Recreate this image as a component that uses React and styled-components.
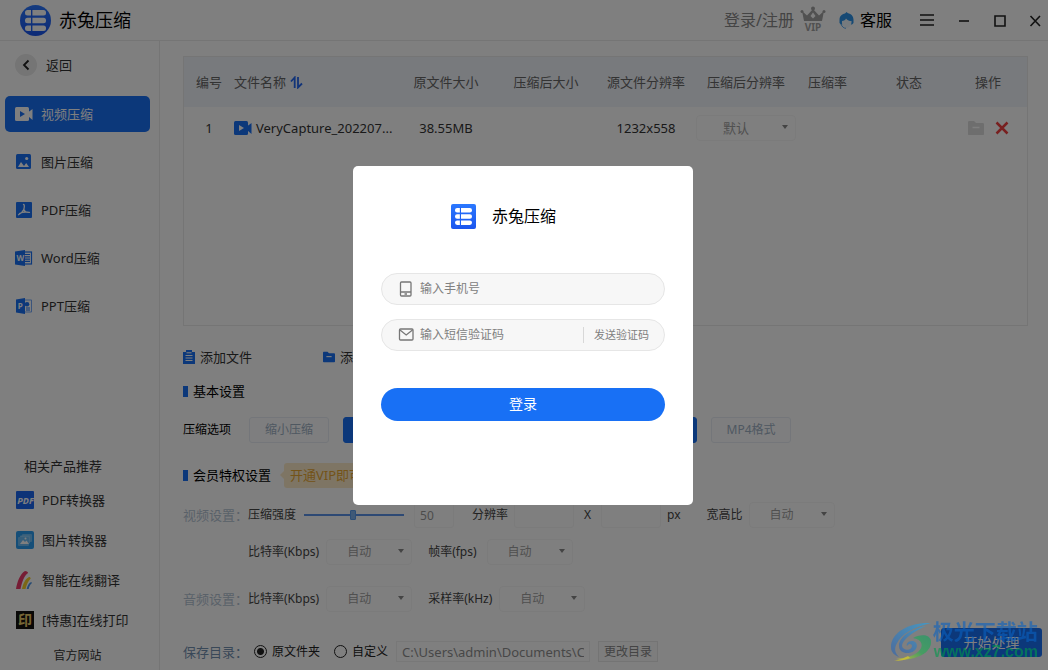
import React, { useState } from "react";
import styled, { createGlobalStyle } from "styled-components";

const GlobalStyle = createGlobalStyle`
  * {
    box-sizing: border-box;
  }
  body {
    margin: 0;
    background: #fff;
    color: #333;
    font-family: "Noto Sans", "Noto Sans CJK SC", sans-serif;
    font-size: 13px;
    line-height: 20px;
  }
  button, input, select {
    font: inherit;
    margin: 0;
  }
  a {
    color: inherit;
    text-decoration: none;
  }
  svg {
    display: block;
    flex: none;
  }
`;

const Page = styled.div`
  display: flex;
  flex-direction: column;
  min-height: 100vh;
`;

const Header = styled.header`
  display: flex;
  align-items: center;
  height: 41px;
  padding: 0 6px 0 20px;
  border-bottom: 1px solid #ebebeb;
`;

const HeaderTitle = styled.h1`
  flex: 1;
  margin: 0 0 0 8px;
  font-size: 18px;
  font-weight: normal;
  line-height: 26px;
  color: #000;
`;

const HeaderLink = styled.a`
  display: flex;
  align-items: center;
  gap: 6px;
  margin-right: ${(p) => p.$space}px;
  font-size: 16px;
  line-height: 24px;
  color: ${(p) => p.$color};
`;

const WindowButtons = styled.div`
  display: flex;
  gap: 21px;
`;

const IconButton = styled.button`
  display: flex;
  padding: 0;
  border: 0;
  background: none;
  cursor: pointer;
`;

const Body = styled.div`
  display: flex;
  flex: 1;
`;

const Sidebar = styled.aside`
  display: flex;
  flex-direction: column;
  flex: none;
  width: 160px;
  padding: 13px 9px 4px 5px;
  border-right: 1px solid #ebebeb;
`;

const BackButton = styled.button`
  display: flex;
  align-items: center;
  gap: 9px;
  margin-bottom: 20px;
  padding: 0 0 0 10px;
  border: 0;
  background: none;
  color: #333;
  cursor: pointer;
`;

const BackCircle = styled.span`
  display: flex;
  align-items: center;
  justify-content: center;
  width: 22px;
  height: 22px;
  border-radius: 50%;
  background: #eaeaea;
`;

const Nav = styled.nav`
  display: flex;
  flex-direction: column;
  gap: 12px;
`;

const NavItem = styled.a`
  display: flex;
  align-items: center;
  gap: 8px;
  height: 36px;
  padding-left: 10px;
  border-radius: 5px;
  background: ${(p) => (p.$active ? "#1870f5" : "transparent")};
  color: ${(p) => (p.$active ? "#fff" : "#333")};
`;

const Related = styled.section`
  display: flex;
  flex-direction: column;
  margin-top: auto;
`;

const RelatedTitle = styled.h2`
  margin: 0 0 4px;
  padding-left: 19px;
  font-size: 13px;
  font-weight: normal;
  line-height: 20px;
`;

const RelatedLink = styled.a`
  display: flex;
  align-items: center;
  gap: 8px;
  height: 40px;
  padding-left: 11px;
`;

const SiteLink = styled.a`
  margin-top: 6px;
  font-size: 12px;
  text-align: center;
`;

const Main = styled.main`
  display: flex;
  flex: 1;
  flex-direction: column;
  min-width: 0;
`;

const FilePanel = styled.div`
  flex: 1;
  min-height: 120px;
  margin: 15px 20px 0 23px;
  border: 1px solid #ebebeb;
`;

const FileTable = styled.table`
  width: 100%;
  border-collapse: collapse;
  table-layout: fixed;
`;

const Th = styled.th`
  width: ${(p) => (p.$width ? `${p.$width}px` : "auto")};
  height: 50px;
  padding: 0 ${(p) => (p.$last ? 10 : 0)}px 0 0;
  background: #f0f4fa;
  color: #666;
  font-weight: normal;
  text-align: ${(p) => (p.$left ? "left" : "center")};
  white-space: nowrap;
`;

const Td = styled.td`
  height: 42px;
  padding: 0 ${(p) => (p.$last ? 10 : 0)}px 0 0;
  text-align: center;
`;

const Inline = styled.span`
  display: flex;
  align-items: center;
  justify-content: ${(p) => (p.$center ? "center" : "flex-start")};
  gap: ${(p) => p.$gap}px;
  white-space: nowrap;
`;

const SelectWrap = styled.span`
  display: inline-grid;
  align-items: center;
  width: ${(p) => p.$width}px;

  > * {
    grid-area: 1 / 1;
  }
  > svg {
    justify-self: end;
    margin-right: 8px;
  }
`;

const SelectBox = styled.select`
  width: 100%;
  height: 26px;
  padding: 0 20px 0 0;
  border: 1px solid #f6f6f6;
  border-radius: 4px;
  background: #fff;
  color: #a0a0a0;
  opacity: 1;
  appearance: none;
  text-align: center;
  text-align-last: center;
`;

const Settings = styled.div`
  display: flex;
  flex-direction: column;
  padding: 0 20px 0 23px;
`;

const Toolbar = styled.div`
  display: flex;
  gap: 71px;
  margin-top: 21px;
`;

const ToolButton = styled.button`
  display: flex;
  align-items: center;
  gap: 5px;
  padding: 0;
  border: 0;
  background: none;
  color: #333;
  cursor: pointer;
`;

const SectionTitle = styled.h2`
  display: flex;
  align-items: center;
  gap: 5px;
  height: 20px;
  margin: ${(p) => p.$top}px 0 0;
  color: #000;
  font-size: 13px;
  font-weight: normal;

  &::before {
    content: "";
    width: 5px;
    height: 11px;
    background: #1870f5;
  }
`;

const VipTip = styled.span`
  display: flex;
  align-items: center;
  margin-left: 4px;
  color: #e8a732;

  > span {
    height: 25px;
    padding: 0 6px;
    border-radius: 3px;
    background: #fdebc8;
    line-height: 25px;
  }
  &::before {
    content: "";
    border: 4px solid transparent;
    border-left-width: 0;
    border-right-color: #fdebc8;
  }
`;

const Row = styled.div`
  display: flex;
  align-items: center;
  margin-top: ${(p) => p.$top}px;
  font-size: 12px;
  white-space: nowrap;
`;

const OptionGroup = styled.div`
  display: flex;
  align-items: center;
  gap: 14px;
  margin-right: 34px;
`;

const OptionLabel = styled.span`
  margin-right: 4px;
  color: #000;
`;

const OptionButton = styled.button`
  width: 80px;
  height: 26px;
  padding: 0;
  border: 1px solid ${(p) => (p.$active ? "#1870f5" : "#e8edf4")};
  border-radius: 3px;
  background: ${(p) => (p.$active ? "#1870f5" : "#fcfdff")};
  color: ${(p) => (p.$active ? "#fff" : "#9fb0c3")};
  cursor: pointer;
`;

const GroupName = styled.span`
  width: ${(p) => (p.$strong ? 71 : 65)}px;
  color: ${(p) => (p.$strong ? "#7390b0" : "#b4c3d3")};
  font-size: 13px;
`;

const Field = styled.label`
  display: flex;
  align-items: center;
  gap: ${(p) => p.$gap}px;
  margin-right: ${(p) => p.$space}px;
  color: #444;
`;

const Slider = styled.input`
  width: 100px;
  height: 10px;
  margin: 0;
  appearance: none;
  background: none;

  &::-webkit-slider-runnable-track {
    height: 2px;
    background: #5b93e8;
  }
  &::-webkit-slider-thumb {
    width: 6px;
    height: 10px;
    margin-top: -4px;
    border: 1px solid #5a9cec;
    border-radius: 1px;
    appearance: none;
    background: #7fb2ee;
  }
`;

const NumberBox = styled.input`
  width: ${(p) => p.$width}px;
  height: 26px;
  padding: 0 5px;
  border: 1px solid #f6f6f6;
  border-radius: 3px;
  background: #fff;
  color: #999;
`;

const Footer = styled.footer`
  display: flex;
  align-items: flex-start;
  justify-content: space-between;
  margin-top: 16px;
  padding: 0 6px 8px 23px;
  font-size: 12px;
  white-space: nowrap;
`;

const SaveTo = styled.div`
  display: flex;
  align-items: center;
  padding-top: 13px;
`;

const RadioLabel = styled.label`
  display: flex;
  align-items: center;
  gap: 5px;
  margin-right: ${(p) => p.$space}px;
  color: #222;
`;

const Radio = styled.input`
  width: 13px;
  height: 13px;
  border: 1px solid #222;
  border-radius: 50%;
  appearance: none;

  &:checked {
    background: radial-gradient(circle, #222 0 3px, transparent 4px);
  }
`;

const PathBox = styled.input`
  width: 194px;
  height: 21px;
  padding: 0 5px;
  border: 1px solid #f0f0f0;
  background: #fff;
  color: #8f8f8f;
  font-size: 13px;
`;

const ChangeButton = styled.button`
  width: 60px;
  height: 21px;
  margin-left: 8px;
  padding: 0;
  border: 1px solid #e8e8e8;
  background: #fafafa;
  color: #888;
  line-height: 18px;
`;

const StartButton = styled.button`
  width: 101px;
  height: 29px;
  padding: 0;
  border: 0;
  border-radius: 3px;
  background: #1870f5;
  color: #fff;
  font-size: 14px;
`;

const Overlay = styled.div`
  position: fixed;
  inset: 0;
  display: flex;
  align-items: center;
  justify-content: center;
  padding-right: 2px;
  background: rgba(0, 0, 0, 0.5);
`;

const LoginForm = styled.form`
  display: flex;
  flex-direction: column;
  width: 340px;
  padding: 38px 28px 84px;
  border-radius: 5px;
  background: #fff;
`;

const Brand = styled.div`
  display: flex;
  align-items: center;
  gap: 16px;
  height: 25px;
  margin-bottom: 44px;
  padding-left: 70px;
  color: #000;
  font-size: 16px;
`;

const InputRow = styled.div`
  display: flex;
  align-items: center;
  height: 32px;
  margin-bottom: 14px;
  padding: 0 15px 0 16px;
  border: 1px solid #e6e6e6;
  border-radius: 16px;
  background: #f7f7f7;
`;

const Input = styled.input`
  flex: 1;
  min-width: 0;
  padding: 0 0 0 6px;
  border: 0;
  outline: 0;
  background: none;
  color: #333;
  font-size: 12px;

  &::placeholder {
    color: #808080;
  }
`;

const CodeButton = styled.button`
  height: 16px;
  padding: 0 0 0 10px;
  border: 0;
  border-left: 1px solid #d8d8d8;
  background: none;
  color: #808080;
  font-size: 11px;
  line-height: 14px;
  cursor: pointer;
`;

const ButtonSubmit = styled.button`
  height: 33px;
  margin-top: 23px;
  border: 0;
  border-radius: 17px;
  background: #1870f5;
  color: #fff;
  font-size: 14px;
  cursor: pointer;
`;

const Watermark = styled.div`
  position: fixed;
  right: 10px;
  bottom: 8px;
  display: flex;
  align-items: flex-end;
  opacity: 0.6;
  pointer-events: none;
`;

const WatermarkText = styled.div`
  display: flex;
  flex-direction: column;
  color: #0a62c0;
  font-size: 21px;
  font-weight: bold;
  line-height: 22px;
`;

const WatermarkUrl = styled.span`
  padding-left: 1px;
  color: #009a4c;
  font-family: "Liberation Sans", sans-serif;
  font-size: 16px;
  line-height: 20px;
`;

/* logo: list of three rounded bars cut by a vertical line */
const Logo = ({ size, round }) => (
  <svg width={size} height={size} viewBox="0 0 31 31">
    <defs>
      <linearGradient id={`logo${size}`} x1="0" y1="0" x2="0" y2="1">
        <stop offset="0" stopColor="#2b78ff" />
        <stop offset="1" stopColor="#1b55ee" />
      </linearGradient>
    </defs>
    <rect width="31" height="31" rx={round ? 15.5 : 2.5} fill={`url(#logo${size})`} />
    <g fill="#fff">
      <rect x="5" y="5" width="21" height="5.5" rx="2.5" />
      <rect x="5" y="12.7" width="21" height="5.5" rx="2.5" />
      <rect x="5" y="20.4" width="21" height="5.5" rx="2.5" />
    </g>
    <path d="M11.7 4v23" stroke="#1f62f4" strokeWidth="1.4" />
  </svg>
);

const VideoIcon = ({ color, inner }) => (
  <svg width="18" height="16" viewBox="0 0 18 16">
    <rect y="1" width="14" height="14" rx="1.5" fill={color} />
    <path d="M13.5 6 17.5 3v11l-4-3.5z" fill={color} />
    <path d="M5 5v6l5-3z" fill={inner} />
  </svg>
);

const ImageIcon = () => (
  <svg width="18" height="16" viewBox="0 0 18 16">
    <rect x="1" y="0" width="15" height="15" rx="1.5" fill="#1870f5" />
    <circle cx="11.7" cy="4.5" r="1.6" fill="#fff" />
    <path d="M3 13l3-5 3 4 2.200-3L14 13z" fill="#fff" />
  </svg>
);

const PdfIcon = () => (
  <svg width="18" height="16" viewBox="0 0 18 16">
    <rect x="1" width="16" height="16" rx="1" fill="#1870f5" />
    <path
      d="M8.5 2.5c1.3 0 .8 3 .3 5 1 2.3 3 3.3 5.7 2.8M8.8 7.5C7.500 10.500 5 12 3.500 12.800M4.500 11.500c2.500-1.300 6-1.800 9.500-1.200"
      fill="none"
      stroke="#fff"
      strokeWidth="1.3"
      strokeLinecap="round"
    />
  </svg>
);

const OfficeIcon = ({ letter }) => (
  <svg width="18" height="16" viewBox="0 0 18 16">
    <rect x="9" y="2" width="7.5" height="12" fill="#fff" stroke="#1870f5" strokeWidth={letter === "W" ? 1.2 : 0.6} />
    {letter === "W" ? (
      <path d="M10 4.500h5M10 6.800h5M10 9.100h5M10 11.400h5" stroke="#1870f5" strokeWidth="1.2" />
    ) : (
      <>
        <circle cx="12" cy="6.2" r="2.3" fill="#1870f5" />
        <path d="M11 10h4M11 12h4" stroke="#1870f5" />
      </>
    )}
    <path d={letter === "W" ? "M0 1.500 10 0v16L0 14.500z" : "M1 1.500 10 0v16l-9-1.500z"} fill="#1870f5" />
    <text x="5.3" y="11" fill="#fff" fontSize="8" fontWeight="bold" textAnchor="middle">
      {letter}
    </text>
  </svg>
);

const PdfToolIcon = () => (
  <svg width="18" height="18" viewBox="0 0 18 18">
    <rect width="18" height="18" rx="1" fill="#1b66f0" />
    <text x="9.5" y="12.5" fill="#fff" fontSize="9" fontWeight="bold" fontStyle="italic" textAnchor="middle">
      PDF
    </text>
  </svg>
);

const ImageToolIcon = () => (
  <svg width="18" height="18" viewBox="0 0 18 18">
    <rect width="18" height="18" rx="2" fill="#2a9df0" />
    <rect x="6" y="3" width="10" height="8" rx="1" fill="#6fbdf5" />
    <rect x="4" y="4.500" width="10" height="8" rx="1" fill="#8bcbf8" />
    <rect x="2" y="6" width="11" height="9" rx="1" fill="#6fbdf5" />
    <path d="M4 13l3-4 2 2 1.500-1.500L13 13z" fill="#fff" />
    <circle cx="9.500" cy="7.500" r="1" fill="#fff" />
  </svg>
);

const TranslateIcon = () => (
  <svg width="18" height="18" viewBox="0 0 18 18">
    <path d="M0 18C1 11 4 3 9 0c2 0 3 1 3 2-4 3-6 9-7.500 16z" fill="#ed3b6b" />
    <path d="M6 18c1-5 3-10 7-12 1 0 1.700.6 1.700 1.500C12 10 10.500 14 9.500 18z" fill="#f7cf2b" />
    <path d="M10.700 18c.7-3 2-6 4.500-7l.8.9c-2 1.500-2.800 3.600-3.300 6.100z" fill="#4a94e6" />
  </svg>
);

const PrintIcon = () => (
  <svg width="18" height="18" viewBox="0 0 18 18">
    <rect width="18" height="18" fill="#141210" />
    <text x="9" y="14" fill="#eecf6b" fontSize="14" fontWeight="bold" textAnchor="middle">
      印
    </text>
  </svg>
);

const SortIcon = () => (
  <svg width="13" height="13" viewBox="0 0 13 13" fill="none" stroke="#2468f2" strokeWidth="1.8">
    <path d="M1 5.500 4.700 1.500V12M8 1v10.500l4-4" />
  </svg>
);

const VipIcon = () => (
  <svg width="26" height="28" viewBox="0 0 26 28" fill="#a3a3a3">
    <circle cx="13" cy="2.500" r="2" />
    <circle cx="2" cy="5.500" r="1.500" />
    <circle cx="24" cy="5.500" r="1.500" />
    <path d="M2 5l5 4.500 6-6.500 6 6.500L24 5l-2 10H4zM13 6.500 10.500 10l2.500 2.500 2.500-2.500z" fillRule="evenodd" />
    <text x="13" y="25" fontSize="10" fontWeight="bold" textAnchor="middle">
      VIP
    </text>
  </svg>
);

const ServiceIcon = () => (
  <svg width="15" height="17" viewBox="0 0 15 17">
    <path d="M6 1.500 7.500 0 9 1.200C12 1.500 14.500 4 14.500 8v3l-1.500 1.500H2L.5 11V8C.5 4 3 2 6 1.500z" fill="#2c93e8" />
    <path d="M3 9c2 0 3.500-1 4-2.500C8.500 8.500 10.500 9 12.500 9c.3 4-2 7-5 7S2.500 13 3 9z" fill="#eef6fd" />
    <path d="M2 12c1 3 3 4.300 5 4.300" fill="none" stroke="#5aaaf0" />
  </svg>
);

const FolderIcon = ({ color, size }) => (
  <svg width={size} height={size} viewBox="0 0 16 16">
    <path d="M0 2.500C0 1.500.5 1 1.500 1H6l2 2h6.500c1 0 1.500.5 1.500 1.500V14c0 .6-.4 1-1 1H1c-.6 0-1-.4-1-1z" fill={color} />
    <path d="M4.500 7.500h7" stroke="#fff" strokeWidth="1.5" />
  </svg>
);

const ClipboardIcon = () => (
  <svg width="12" height="14" viewBox="0 0 12 14">
    <path d="M0 2h3V0h6v2h3v12H0z" fill="#1870f5" />
    <path d="M3.500 2.800h5M2.500 5.500h7M2.500 8h7M2.500 10.500h7" stroke="#fff" />
  </svg>
);

const DropdownSelect = ({ label, width, children }) => (
  <SelectWrap $width={width}>
    <SelectBox aria-label={label} disabled>
      <option>{children}</option>
    </SelectBox>
    <svg width="6" height="6" viewBox="0 0 6 6">
      <path d="M0 0h6L3 4z" fill="#888" />
    </svg>
  </SelectWrap>
);

const navItems = [
  { name: "视频压缩", icon: <VideoIcon color="#fff" inner="#1870f5" />, active: true },
  { name: "图片压缩", icon: <ImageIcon /> },
  { name: "PDF压缩", icon: <PdfIcon /> },
  { name: "Word压缩", icon: <OfficeIcon letter="W" /> },
  { name: "PPT压缩", icon: <OfficeIcon letter="P" /> },
];

const products = [
  { name: "PDF转换器", icon: <PdfToolIcon /> },
  { name: "图片转换器", icon: <ImageToolIcon /> },
  { name: "智能在线翻译", icon: <TranslateIcon /> },
  { name: "[特惠]在线打印", icon: <PrintIcon /> },
];

const TopBar = () => (
  <Header>
    <Logo size={31} round />
    <HeaderTitle>赤兔压缩</HeaderTitle>
    <HeaderLink href="#login" $color="#888" $space={13}>
      登录/注册
      <VipIcon />
    </HeaderLink>
    <HeaderLink href="#service" $color="#000" $space={25}>
      <ServiceIcon />
      客服
    </HeaderLink>
    <WindowButtons>
      <IconButton aria-label="菜单">
        <svg width="20" height="16" viewBox="0 0 20 16" stroke="#222" strokeWidth="1.5">
          <path d="M3 3h14M3 8h14M3 13h14" />
        </svg>
      </IconButton>
      <IconButton aria-label="最小化">
        <svg width="14" height="16" viewBox="0 0 14 16" stroke="#222" strokeWidth="1.6">
          <path d="M1 9h10" />
        </svg>
      </IconButton>
      <IconButton aria-label="最大化">
        <svg width="14" height="16" viewBox="0 0 14 16" stroke="#222" strokeWidth="1.6" fill="none">
          <path d="M2 4h10v10H2z" />
        </svg>
      </IconButton>
      <IconButton aria-label="关闭">
        <svg width="14" height="16" viewBox="0 0 14 16" stroke="#222" strokeWidth="1.6">
          <path d="M2.500 4l9.500 10M12 4 2.500 14" />
        </svg>
      </IconButton>
    </WindowButtons>
  </Header>
);

const SideMenu = () => (
  <Sidebar>
    <BackButton>
      <BackCircle>
        <svg width="8" height="12" viewBox="0 0 8 12" fill="none" stroke="#222" strokeWidth="1.8">
          <path d="M6.500 1.500 2 6l4.500 4.500" />
        </svg>
      </BackCircle>
      返回
    </BackButton>
    <Nav>
      {navItems.map((item) => (
        <NavItem key={item.name} href="#nav" $active={item.active}>
          {item.icon}
          {item.name}
        </NavItem>
      ))}
    </Nav>
    <Related>
      <RelatedTitle>相关产品推荐</RelatedTitle>
      {products.map((item) => (
        <RelatedLink key={item.name} href="#product">
          {item.icon}
          {item.name}
        </RelatedLink>
      ))}
      <SiteLink href="#site">官方网站</SiteLink>
    </Related>
  </Sidebar>
);

const Files = () => (
  <FilePanel>
    <FileTable>
      <thead>
        <tr>
          <Th $width={50}>编号</Th>
          <Th $left>
            <Inline $gap={4}>
              文件名称
              <SortIcon />
            </Inline>
          </Th>
          <Th $width={100}>原文件大小</Th>
          <Th $width={100}>压缩后大小</Th>
          <Th $width={100}>源文件分辨率</Th>
          <Th $width={100}>压缩后分辨率</Th>
          <Th $width={63}>压缩率</Th>
          <Th $width={100}>状态</Th>
          <Th $width={68} $last>
            操作
          </Th>
        </tr>
      </thead>
      <tbody>
        <tr>
          <Td>1</Td>
          <Td>
            <Inline $gap={4}>
              <VideoIcon color="#1870f5" inner="#fff" />
              VeryCapture_202207...
            </Inline>
          </Td>
          <Td>38.55MB</Td>
          <Td />
          <Td>1232x558</Td>
          <Td>
            <Inline $center>
              <DropdownSelect label="压缩后分辨率" width={100}>
                默认
              </DropdownSelect>
            </Inline>
          </Td>
          <Td />
          <Td />
          <Td $last>
            <Inline $center $gap={11}>
              <IconButton aria-label="打开文件夹">
                <FolderIcon color="#dcdcdc" size={16} />
              </IconButton>
              <IconButton aria-label="删除">
                <svg width="14" height="14" viewBox="0 0 14 14" stroke="#f04040" strokeWidth="2.5">
                  <path d="M1.500 1.500l11 11M12.500 1.500l-11 11" />
                </svg>
              </IconButton>
            </Inline>
          </Td>
        </tr>
      </tbody>
    </FileTable>
  </FilePanel>
);

const SettingsArea = () => (
  <Settings>
    <Toolbar>
      <ToolButton>
        <ClipboardIcon />
        添加文件
      </ToolButton>
      <ToolButton>
        <FolderIcon color="#1870f5" size={12} />
        添加文件夹
      </ToolButton>
    </Toolbar>
    <SectionTitle $top={14}>基本设置</SectionTitle>
    <Row $top={16}>
      <OptionGroup>
        <OptionLabel>压缩选项</OptionLabel>
        <OptionButton>缩小压缩</OptionButton>
        <OptionButton $active>普通压缩</OptionButton>
        <OptionButton>清晰优先</OptionButton>
      </OptionGroup>
      <OptionGroup>
        <OptionLabel>输出格式</OptionLabel>
        <OptionButton $active>保留原格式</OptionButton>
        <OptionButton>MP4格式</OptionButton>
      </OptionGroup>
    </Row>
    <SectionTitle $top={22}>
      会员特权设置
      <VipTip>
        <span>开通VIP即可使用</span>
      </VipTip>
    </SectionTitle>
    <Row $top={17}>
      <GroupName>视频设置：</GroupName>
      <Field $gap={8} $space={10}>
        压缩强度
        <Slider type="range" defaultValue="49" />
      </Field>
      <Field $space={18}>
        <NumberBox $width={40} aria-label="压缩强度" defaultValue="50" />
      </Field>
      <Field $gap={6} $space={10}>
        分辨率
        <NumberBox $width={60} />
      </Field>
      <Field $gap={10} $space={6}>
        X
        <NumberBox $width={60} />
      </Field>
      <Field as="span" $space={26}>
        px
      </Field>
      <Field $gap={6} $space={0}>
        宽高比
        <DropdownSelect width={86}>自动</DropdownSelect>
      </Field>
    </Row>
    <Row $top={11}>
      <GroupName />
      <Field $gap={7} $space={16}>
        比特率(Kbps)
        <DropdownSelect width={86}>自动</DropdownSelect>
      </Field>
      <Field $gap={10} $space={0}>
        帧率(fps)
        <DropdownSelect width={86}>自动</DropdownSelect>
      </Field>
    </Row>
    <Row $top={21}>
      <GroupName>音频设置：</GroupName>
      <Field $gap={7} $space={16}>
        比特率(Kbps)
        <DropdownSelect width={86}>自动</DropdownSelect>
      </Field>
      <Field $gap={7} $space={0}>
        采样率(kHz)
        <DropdownSelect width={86}>自动</DropdownSelect>
      </Field>
    </Row>
  </Settings>
);

const SaveBar = () => {
  const [target, setTarget] = useState("source");

  return (
    <Footer>
      <SaveTo>
        <GroupName $strong>保存目录：</GroupName>
        <RadioLabel $space={14}>
          <Radio
            type="radio"
            name="target"
            checked={target === "source"}
            onChange={() => setTarget("source")}
          />
          原文件夹
        </RadioLabel>
        <RadioLabel $space={8}>
          <Radio
            type="radio"
            name="target"
            checked={target === "custom"}
            onChange={() => setTarget("custom")}
          />
          自定义
        </RadioLabel>
        <PathBox aria-label="保存目录" readOnly value="C:\Users\admin\Documents\CTCompress" />
        <ChangeButton>更改目录</ChangeButton>
      </SaveTo>
      <StartButton>开始处理</StartButton>
    </Footer>
  );
};

const LoginDialog = () => (
  <Overlay>
    <LoginForm onSubmit={(e) => e.preventDefault()}>
      <Brand>
        <Logo size={25} />
        赤兔压缩
      </Brand>
      <InputRow>
        <svg width="16" height="16" viewBox="0 0 16 16" fill="none" stroke="#777" strokeWidth="1.3">
          <rect x="2.500" y="1" width="10.500" height="14" rx="1" />
          <path d="M2.500 11H13M6.500 13H9" />
        </svg>
        <Input type="tel" name="phone" aria-label="手机号" placeholder="输入手机号" />
      </InputRow>
      <InputRow>
        <svg width="16" height="16" viewBox="0 0 16 16" fill="none" stroke="#777" strokeWidth="1.3">
          <rect x="1.500" y="2" width="13.500" height="11" rx="1" />
          <path d="M2 3l6.200 5L14.500 3" />
        </svg>
        <Input type="text" name="code" aria-label="短信验证码" placeholder="输入短信验证码" />
        <CodeButton type="button">发送验证码</CodeButton>
      </InputRow>
      <ButtonSubmit type="submit">登录</ButtonSubmit>
    </LoginForm>
  </Overlay>
);

const SiteMark = () => (
  <Watermark>
    <svg width="43" height="40" viewBox="0 0 43 40">
      <defs>
        <linearGradient id="markTop" x1="0" y1="1" x2="1" y2="0">
          <stop offset="0" stopColor="#2a5fb0" />
          <stop offset="1" stopColor="#22a8ee" />
        </linearGradient>
        <linearGradient id="markBottom" x1="0" y1="1" x2="1" y2="0">
          <stop offset="0" stopColor="#f0e010" />
          <stop offset="0.5" stopColor="#20b050" />
          <stop offset="1" stopColor="#0fa060" />
        </linearGradient>
      </defs>
      <path
        d="M41 1C20 0 1 10 1 25c0 5 3 8 8 10-4-4-5-8-2.500-13C11 12 24 5 41 1z"
        fill="url(#markTop)"
      />
      <path
        d="M36 4C21 7 9 15 9 24c0 7 9 9 15 5 5-4 3-10-2-10-4 0-6 3-5 5 2-3 5-2 5 0 0 4-6 5-9 2-4-5 7-15 23-22z"
        fill="url(#markTop)"
      />
      <path
        d="M23 16c7-4 17-4 18 3 1 9-9 16-21 18-4 1-10 1-14 0 10-1 18-3 23-8 5-5 3-12-6-13z"
        fill="url(#markBottom)"
      />
      <path d="M4 39c6 0 11-1 16-3l-2-2c-4 2-8 4-14 5z" fill="#f0e010" />
    </svg>
    <WatermarkText>
      极光下载站
      <WatermarkUrl>www.xz7.com</WatermarkUrl>
    </WatermarkText>
  </Watermark>
);

const App = () => (
  <>
    <GlobalStyle />
    <Page>
      <TopBar />
      <Body>
        <SideMenu />
        <Main>
          <Files />
          <SettingsArea />
          <SaveBar />
        </Main>
      </Body>
    </Page>
    <LoginDialog />
    <SiteMark />
  </>
);

export default App;
